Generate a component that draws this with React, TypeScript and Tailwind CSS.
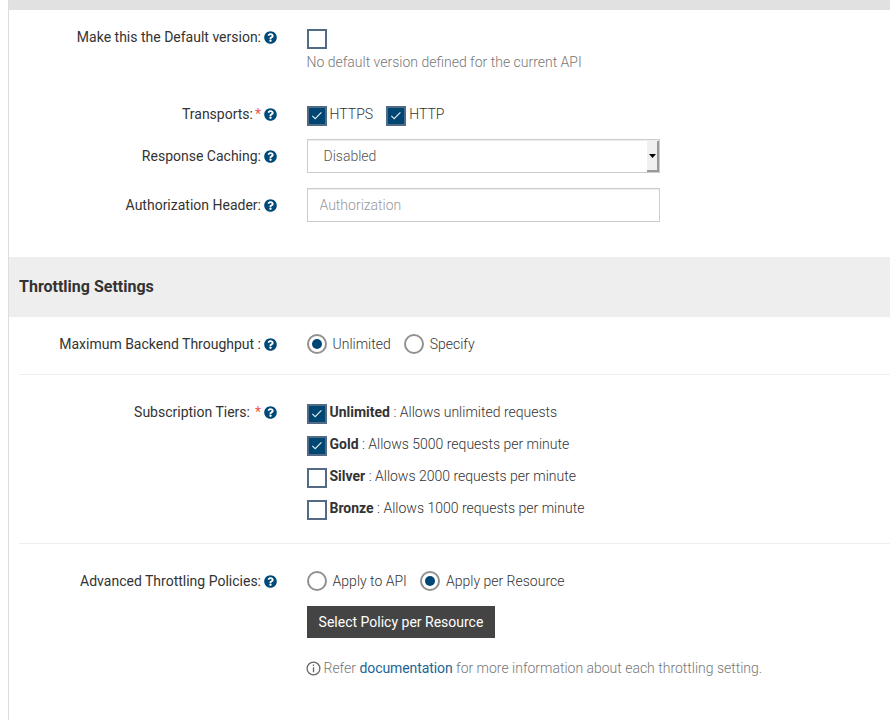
import React from "react";
import { FaQuestionCircle } from "react-icons/fa";

function Help() {
  return <FaQuestionCircle className="ml-[3px] mt-[4px] h-[13px] w-[13px] shrink-0 text-[#004a7a]" />;
}

function Row({ label, required, gap, className, children }: { label: string; required?: boolean; gap?: string; className: string; children: React.ReactNode }) {
  return (
    <div className={"flex items-start " + className}>
      <div className="flex w-[268px] shrink-0 justify-end font-normal text-[#333]">
        <span>{label}</span>
        {required && <span className={"text-[#f0584c] " + (gap ?? "ml-[2px]")}>*</span>}
        <Help />
      </div>
      <div className="ml-[30px] flex flex-col items-start">{children}</div>
    </div>
  );
}

function Check({ checked }: { checked?: boolean }) {
  return (
    <span className={"mt-[2px] flex h-[20px] w-[20px] shrink-0 items-center justify-center border-2 border-[#526a84] " + (checked ? "bg-[#004673]" : "bg-white")}>
      {checked && (
        <svg className="h-4 w-4" viewBox="0 0 16 16" fill="none" stroke="#dfe9f0" strokeWidth="1.2">
          <path d="M3.3 7.9 6.2 10.6 12.4 4.4" />
        </svg>
      )}
    </span>
  );
}

function Radio({ checked }: { checked?: boolean }) {
  return (
    <span className="flex h-[20px] w-[20px] shrink-0 items-center justify-center rounded-full border-2 border-[#919191] bg-white">
      {checked && <span className="h-[10px] w-[10px] rounded-full bg-[#004673]" />}
    </span>
  );
}

const tiers = [
  { name: "Unlimited", text: "Allows unlimited requests", on: true },
  { name: "Gold", text: "Allows 5000 requests per minute", on: true },
  { name: "Silver", text: "Allows 2000 requests per minute", on: false },
  { name: "Bronze", text: "Allows 1000 requests per minute", on: false },
];

export default function App() {
  return (
    <div className="h-[720px] w-[890px] overflow-hidden bg-white pl-[8px] font-['Roboto',sans-serif] text-[14px] leading-[20px] font-light text-[#333]">
      <div className="h-full border-l border-[#ddd]">
        <div className="h-[10px] bg-[#e1e1e1]" />
        <section className="h-[247px] pt-[17px]">
          <Row label="Make this the Default version:" className="h-[77px]">
            <Check />
            <p className="-ml-[0.5px] mt-[3px] text-[#777]">No default version defined for the current API</p>
          </Row>
          <Row label="Transports:" required className="h-[35px]">
            <div className="flex">
              <Check checked />
              <span className="ml-[2.6px] w-[56.4px]">HTTPS</span>
              <Check checked />
              <span className="ml-[3.3px]">HTTP</span>
            </div>
          </Row>
          <div className="flex h-[49px] items-start">
            <div className="mt-[7px] flex w-[268px] justify-end font-normal"><span>Response Caching:</span><Help /></div>
            <div className="ml-[30px] flex h-[34px] w-[353px] border border-[#ccc] shadow-[inset_0_1px_1px_rgba(0,0,0,0.075)]">
              <span className="grow pt-[6px] pl-[15.5px] text-[#555]">Disabled</span>
              <span className="mt-px flex w-[12px] items-center justify-center border-r-2 border-b-2 border-[#999] bg-[#f1f0ee]">
                <svg className="h-[4px] w-[7px]" viewBox="0 0 7 4"><path d="M0 0h7L3.5 4z" fill="#000" /></svg>
              </span>
            </div>
          </div>
          <div className="flex items-start">
            <div className="mt-[7px] flex w-[268px] justify-end font-normal"><span>Authorization Header:</span><Help /></div>
            <input placeholder="Authorization" className="ml-[30px] h-[34px] w-[353px] border border-[#ccc] px-[11.5px] shadow-[inset_0_1px_1px_rgba(0,0,0,0.075)] placeholder:text-[#999]" />
          </div>
        </section>
        <h2 className="flex h-[60px] items-center bg-[#eee] pl-[10px] text-[16px] font-bold">Throttling Settings</h2>
        <div className="ml-[10px] h-[58px] border-b border-[#eee] pt-[17px]">
          <div className="-ml-[10px]">
            <Row label="Maximum Backend Throughput :" className="">
              <div className="flex">
                <Radio checked />
                <span className="ml-[5.5px] w-[71.5px]">Unlimited</span>
                <Radio />
                <span className="ml-[5.7px]">Specify</span>
              </div>
            </Row>
          </div>
        </div>
        <div className="ml-[10px] h-[169px] border-b border-[#eee] pt-[27px]">
          <div className="-ml-[10px]">
            <Row label="Subscription Tiers:" required gap="ml-[5px]" className="">
              {tiers.map((t) => (
                <div key={t.name} className="flex h-[32px]">
                  <Check checked={t.on} />
                  <span className="ml-[2.5px]"><b className="font-bold">{t.name}</b> : {t.text}</span>
                </div>
              ))}
            </Row>
          </div>
        </div>
        <Row label="Advanced Throttling Policies:" className="pt-[27px]">
          <div className="flex">
            <Radio />
            <span className="ml-[5.6px] w-[87.4px]">Apply to API</span>
            <Radio checked />
            <span className="ml-[6px]">Apply per Resource</span>
          </div>
          <button className="mt-[15px] h-[32px] w-[188px] bg-[#444] font-normal text-white">Select Policy per Resource</button>
          <div className="mt-[20px] flex text-[#777]">
            <svg className="-ml-px mt-[3px] mr-[3px] h-[15px] w-[15px]" viewBox="0 0 15 15" fill="none" stroke="#666" strokeWidth="1.3">
              <circle cx="7.5" cy="7.5" r="6.4" />
              <path d="M7.5 6.3v5M7.5 3.6v1.4" />
            </svg>
            <p className="-ml-[0.5px] tracking-[-0.01px]">Refer <a className="font-normal tracking-[-0.08px] text-[#1b6594]">documentation</a> for more information about each throttling setting.</p>
          </div>
        </Row>
      </div>
    </div>
  );
}
